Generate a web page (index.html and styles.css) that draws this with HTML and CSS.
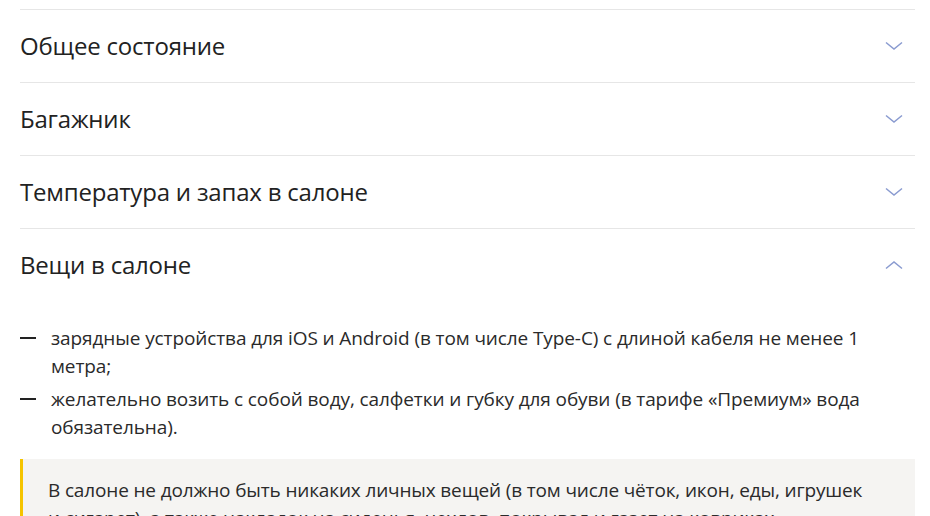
FILE: index.html
```html
<!DOCTYPE html>
<html>
<head>
    <title>Требования к автомобилю</title>
    <link rel="stylesheet" href="styles.css">
</head>
<body>
    <div class="accordion">
        <div class="acc-item">
            <div class="acc-head">
                <span class="acc-title">Общее состояние</span>
                <svg class="chevron" width="18" height="10" viewBox="0 0 18 10"><path d="M1 1.5 L9 8 L17 1.5" /></svg>
            </div>
        </div>
        <div class="acc-item">
            <div class="acc-head">
                <span class="acc-title">Багажник</span>
                <svg class="chevron" width="18" height="10" viewBox="0 0 18 10"><path d="M1 1.5 L9 8 L17 1.5" /></svg>
            </div>
        </div>
        <div class="acc-item">
            <div class="acc-head">
                <span class="acc-title">Температура и запах в салоне</span>
                <svg class="chevron" width="18" height="10" viewBox="0 0 18 10"><path d="M1 1.5 L9 8 L17 1.5" /></svg>
            </div>
        </div>
        <div class="acc-item open">
            <div class="acc-head">
                <span class="acc-title">Вещи в салоне</span>
                <svg class="chevron" width="18" height="10" viewBox="0 0 18 10"><path d="M1 8.5 L9 2 L17 8.5" /></svg>
            </div>
            <div class="acc-body">
                <ul class="dash-list">
                    <li>зарядные устройства для iOS и Android (в том числе Type-C) с длиной кабеля не менее 1 метра;</li>
                    <li>желательно возить с собой воду, салфетки и губку для обуви (в тарифе «Премиум» вода обязательна).</li>
                </ul>
                <div class="note">
                    В салоне не должно быть никаких личных вещей (в том числе чёток, икон, еды, игрушек и сигарет), а также накладок на сиденья, чехлов, покрывал и газет на ковриках.
                </div>
            </div>
        </div>
    </div>
</body>
</html>
```

FILE: styles.css
```css
/* Styling */
body {
    margin: 0;
    font-family: 'Open Sans', 'Noto Sans', sans-serif;
    color: #222;
    background-color: #fff;
}
.accordion {
    padding: 9px 15px 0 20px;
}
.acc-item {
    border-top: 1px solid #e6e6e6;
}
.acc-head {
    height: 72px;
    display: flex;
    align-items: center;
    justify-content: space-between;
    padding-right: 12px;
}
.acc-title {
    font-size: 24px;
    letter-spacing: -0.2px;
    margin-top: -2px;
}
.chevron path {
    fill: none;
    stroke: #8a9bd0;
    stroke-width: 1.5;
}
.acc-body {
    padding-bottom: 20px;
}
.dash-list {
    list-style: none;
    margin: 23px 0 0;
    padding: 0;
}
.dash-list li {
    position: relative;
    padding-left: 31px;
    padding-right: 30px;
    margin-bottom: 5px;
    font-size: 19px;
    line-height: 28px;
    letter-spacing: -0.1px;
    color: #2a2a2a;
}
.dash-list li::before {
    content: "";
    position: absolute;
    left: 0;
    top: 13px;
    width: 16px;
    height: 2px;
    background-color: #222;
}
.note {
    margin-top: 18px;
    border-left: 3px solid #f5c400;
    background-color: #f5f4f2;
    padding: 17px 42px 17px 25px;
    font-size: 19px;
    line-height: 28px;
    letter-spacing: -0.15px;
    color: #2a2a2a;
}
```
